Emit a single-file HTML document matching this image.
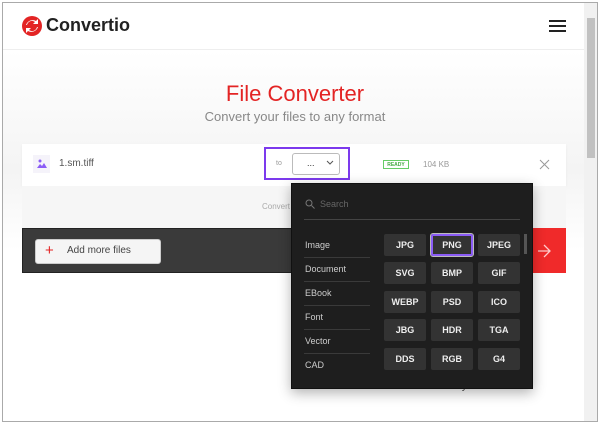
<!DOCTYPE html>
<html><head><style>
*{box-sizing:border-box;margin:0;padding:0}
body{width:600px;height:424px;overflow:hidden;background:#fff;font-family:"Liberation Sans",sans-serif;position:relative}
.a{position:absolute}
.fmt{position:absolute;width:42px;height:22px;background:#333;border-radius:2px;color:#eee;font-size:9px;font-weight:bold;text-align:center;line-height:22px}
.cat{position:absolute;left:305px;font-size:9px;color:#ccc}
.sep{position:absolute;left:304px;width:66px;height:1px;background:#3a3a3a}
</style></head><body>
<div class="a" style="left:2px;top:2px;width:596px;height:420px;border:1px solid #aaa"></div>
<div class="a" style="left:3px;top:50px;width:581px;height:200px;background:linear-gradient(#fff,#f4f4f4 60%,#fff)"></div>
<div class="a" style="left:584px;top:3px;width:13px;height:418px;background:#f1f1f1"></div>
<div class="a" style="left:587px;top:18px;width:8px;height:140px;background:#c1c1c1"></div>
<div class="a" style="left:3px;top:49px;width:581px;height:1px;background:#eee"></div>
<svg class="a" style="left:22px;top:16px" width="20" height="20" viewBox="0 0 20 20"><circle cx="10" cy="10" r="10" fill="#e32424"/><path d="M5 9a5 5 0 0 1 8-3l-2 2h5V3l-2 2A7 7 0 0 0 4 9z M15 11a5 5 0 0 1-8 3l2-2H4v5l2-2a7 7 0 0 0 10-4z" fill="#fff"/></svg>
<div class="a" style="left:46px;top:15px;font-size:18px;font-weight:bold;color:#222">Convertio</div>
<div class="a" style="left:549px;top:20px;width:17px;height:2px;background:#222;box-shadow:0 5px 0 #222,0 10px 0 #222"></div>
<div class="a" style="left:0;width:590px;top:81px;text-align:center;font-size:22px;color:#e32424">File Converter</div>
<div class="a" style="left:0;width:590px;top:109px;text-align:center;font-size:13px;color:#888">Convert your files to any format</div>
<div class="a" style="left:22px;top:144px;width:544px;height:42px;background:#fff;box-shadow:0 1px 3px rgba(0,0,0,.05)"></div>
<div class="a" style="left:33px;top:155px;width:17px;height:18px;background:#f5f3fa"></div>
<svg class="a" style="left:36px;top:158px" width="11" height="11"><circle cx="4" cy="3" r="1.5" fill="#8b5cf6"/><path d="M1 10l3-4 2 2 2-3 3 5z" fill="#8b5cf6"/></svg>
<div class="a" style="left:59px;top:158px;font-size:10px;color:#555">1.sm.tiff</div>
<div class="a" style="left:264px;top:147px;width:86px;height:33px;border:2px solid #7c3aed"></div>
<div class="a" style="left:276px;top:160px;font-size:7px;color:#999">to</div>
<div class="a" style="left:292px;top:153px;width:48px;height:22px;border:1px solid #bbb;border-radius:3px;background:#fff"></div>
<div class="a" style="left:307px;top:158px;font-size:9px;color:#333">...</div>
<svg class="a" style="left:326px;top:160px" width="8" height="5"><path d="M1 1l3 3 3-3" stroke="#555" fill="none"/></svg>
<div class="a" style="left:383px;top:160px;width:26px;height:9px;border:1px solid #6c6;font-size:5px;color:#4a4;text-align:center;line-height:8px;font-weight:bold">READY</div>
<div class="a" style="left:423px;top:160px;font-size:8px;color:#999">104 KB</div>
<svg class="a" style="left:539px;top:159px" width="11" height="11"><path d="M1 1l9 9M10 1l-9 9" stroke="#999"/></svg>
<div class="a" style="left:22px;top:186px;width:544px;height:42px;background:#f6f6f6"></div>
<div class="a" style="left:262px;top:202px;font-size:8px;color:#aaa">Convert</div>
<div class="a" style="left:22px;top:228px;width:511px;height:45px;background:#3a3a3a;border:1px solid #222"></div>
<div class="a" style="left:533px;top:228px;width:33px;height:45px;background:#f02a2a"></div>
<svg class="a" style="left:537px;top:244px" width="14" height="14"><path d="M1 7h12M7 1l6 6-6 6" stroke="#fcc" fill="none" stroke-width="1.3"/></svg>
<div class="a" style="left:35px;top:239px;width:126px;height:25px;background:#f5f5f5;border-radius:3px;border:1px solid #ccc"></div>
<div class="a" style="left:45px;top:242px;font-size:15px;color:#e32424">+</div>
<div class="a" style="left:67px;top:245px;font-size:10px;color:#444">Add more files</div>
<div class="a" style="left:404px;top:381px;font-size:10px;color:#444">Fast and easy</div>
<div class="a" style="left:291px;top:183px;width:242px;height:206px;background:#1e1e1e;border:1px solid #111;box-shadow:0 4px 12px rgba(0,0,0,.3)"></div>
<svg class="a" style="left:305px;top:199px" width="10" height="10"><circle cx="4" cy="4" r="3" stroke="#777" fill="none"/><path d="M6.5 6.5l3 3" stroke="#777"/></svg>
<div class="a" style="left:320px;top:199px;font-size:9px;color:#666">Search</div>
<div class="a" style="left:304px;top:219px;width:216px;height:1px;background:#444"></div>
<div class="cat" style="top:240px">Image</div><div class="sep" style="top:257px"></div>
<div class="cat" style="top:264px">Document</div><div class="sep" style="top:281px"></div>
<div class="cat" style="top:288px">EBook</div><div class="sep" style="top:305px"></div>
<div class="cat" style="top:312px">Font</div><div class="sep" style="top:329px"></div>
<div class="cat" style="top:336px">Vector</div><div class="sep" style="top:353px"></div>
<div class="cat" style="top:360px">CAD</div>
<div class="a" style="left:524px;top:234px;width:3px;height:20px;background:#555"></div>
<div class="fmt" style="left:384px;top:234px">JPG</div>
<div class="fmt" style="left:431px;top:234px;border:2px solid #8b5cf6;outline:1px solid #bbb;line-height:18px">PNG</div>
<div class="fmt" style="left:478px;top:234px">JPEG</div>
<div class="fmt" style="left:384px;top:262px">SVG</div>
<div class="fmt" style="left:431px;top:262px">BMP</div>
<div class="fmt" style="left:478px;top:262px">GIF</div>
<div class="fmt" style="left:384px;top:291px">WEBP</div>
<div class="fmt" style="left:431px;top:291px">PSD</div>
<div class="fmt" style="left:478px;top:291px">ICO</div>
<div class="fmt" style="left:384px;top:319px">JBG</div>
<div class="fmt" style="left:431px;top:319px">HDR</div>
<div class="fmt" style="left:478px;top:319px">TGA</div>
<div class="fmt" style="left:384px;top:348px">DDS</div>
<div class="fmt" style="left:431px;top:348px">RGB</div>
<div class="fmt" style="left:478px;top:348px">G4</div>
</body></html>
